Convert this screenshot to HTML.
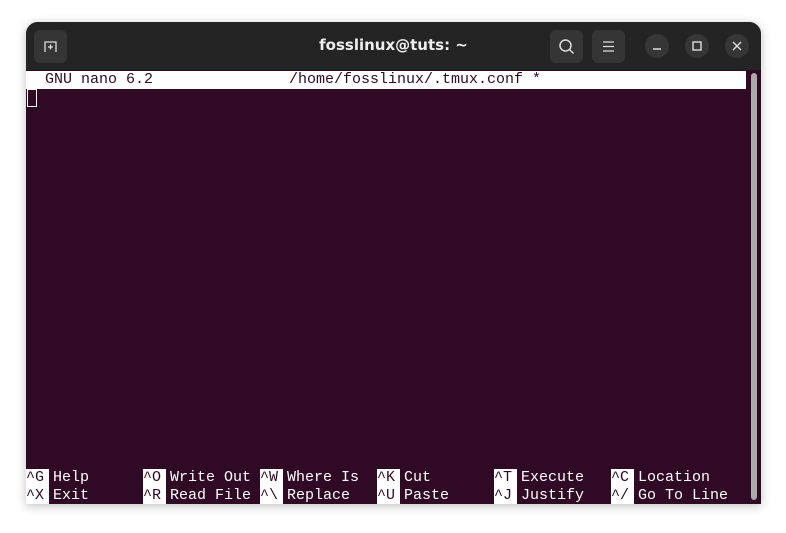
<!DOCTYPE html>
<html><head><meta charset="utf-8"><style>
html,body{margin:0;padding:0;width:786px;height:533px;background:#fff;overflow:hidden}
.win{position:absolute;left:26px;top:22px;width:735px;height:482px;border-radius:12px 12px 0 0;background:#300a24;overflow:hidden;box-shadow:0 2px 10px rgba(0,0,0,.25)}
.tb{position:absolute;left:0;top:0;width:735px;height:48px;background:#242424}
.title{position:absolute;left:0;width:735px;top:14px;text-align:center;color:#eee;font:bold 15px "DejaVu Sans","Liberation Sans",sans-serif}
.btn{position:absolute;top:8px;width:33px;height:33px;border-radius:6px;background:#353535}
.cb{position:absolute;top:12px;width:24px;height:24px;border-radius:50%;background:#363636}
.t{position:absolute;font:15px "Liberation Mono",monospace;color:#fff;white-space:pre;line-height:18px}
.k{position:absolute;background:#fff;color:#300a24;font:15px "Liberation Mono",monospace;line-height:18px;height:18px;width:23px;white-space:pre;overflow:hidden}
</style></head><body>
<div class="win">
<div class="tb">
<div class="btn" style="left:8px"><svg width="33" height="33"><path d="M11 22V12h11v10M16.5 14.5v5M14 17h5" stroke="#ddd" stroke-width="1.3" fill="none"/></svg></div>
<div class="title">fosslinux@tuts: ~</div>
<div class="btn" style="left:524px"><svg width="33" height="33"><circle cx="15.5" cy="15.5" r="5.5" stroke="#ddd" stroke-width="1.5" fill="none"/><path d="M19.5 19.5l4 4" stroke="#ddd" stroke-width="1.5"/></svg></div>
<div class="btn" style="left:566px"><svg width="33" height="33"><path d="M11 12h11M11 16.5h11M11 21h11" stroke="#ddd" stroke-width="1.3"/></svg></div>
<div class="cb" style="left:619px"><svg width="24" height="24"><path d="M8 15h8" stroke="#ddd" stroke-width="1.5"/></svg></div>
<div class="cb" style="left:659px"><svg width="24" height="24"><rect x="8" y="8" width="8" height="8" stroke="#ddd" stroke-width="1.4" fill="none"/></svg></div>
<div class="cb" style="left:699px"><svg width="24" height="24"><path d="M8 8l8 8M16 8l-8 8" stroke="#ddd" stroke-width="1.4"/></svg></div>
</div>
<div style="position:absolute;left:0;top:49px;width:720px;height:18px;background:#fff"></div>
<div class="t" style="left:19px;top:49px;color:#300a24">GNU nano 6.2</div>
<div class="t" style="left:263px;top:49px;color:#300a24">/home/fosslinux/.tmux.conf *</div>
<div style="position:absolute;left:1px;top:67px;width:8px;height:16px;border:1px solid #fff"></div>
<div style="position:absolute;left:725px;top:51px;width:6px;height:427px;background:#aaa;border-radius:3px"></div>

<div class="k" style="left:0;top:447px">^G</div><div class="t" style="left:27px;top:447px">Help</div>
<div class="k" style="left:117px;top:447px">^O</div><div class="t" style="left:144px;top:447px">Write Out</div>
<div class="k" style="left:234px;top:447px">^W</div><div class="t" style="left:261px;top:447px">Where Is</div>
<div class="k" style="left:351px;top:447px">^K</div><div class="t" style="left:378px;top:447px">Cut</div>
<div class="k" style="left:468px;top:447px">^T</div><div class="t" style="left:495px;top:447px">Execute</div>
<div class="k" style="left:585px;top:447px">^C</div><div class="t" style="left:612px;top:447px">Location</div>

<div class="k" style="left:0;top:465px">^X</div><div class="t" style="left:27px;top:465px">Exit</div>
<div class="k" style="left:117px;top:465px">^R</div><div class="t" style="left:144px;top:465px">Read File</div>
<div class="k" style="left:234px;top:465px">^\</div><div class="t" style="left:261px;top:465px">Replace</div>
<div class="k" style="left:351px;top:465px">^U</div><div class="t" style="left:378px;top:465px">Paste</div>
<div class="k" style="left:468px;top:465px">^J</div><div class="t" style="left:495px;top:465px">Justify</div>
<div class="k" style="left:585px;top:465px">^/</div><div class="t" style="left:612px;top:465px">Go To Line</div>
</div>
</body></html>
